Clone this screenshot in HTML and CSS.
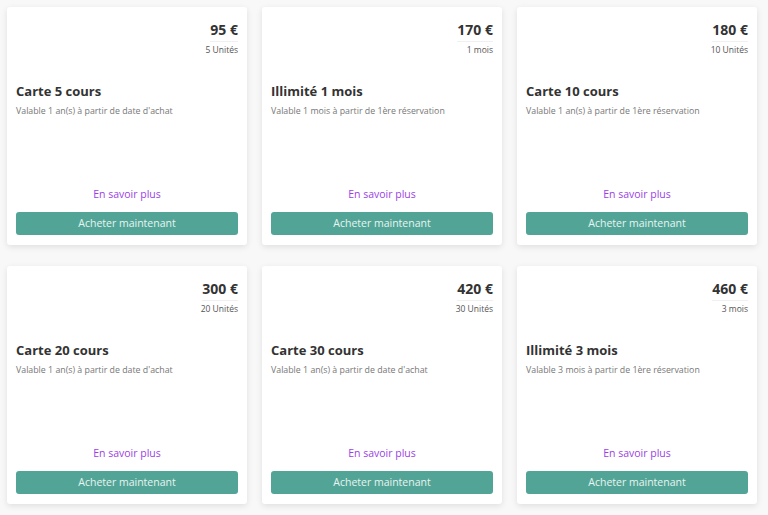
FILE: index.html
```html
<!DOCTYPE html>
<html lang="fr">
<head>
  <meta charset="UTF-8">
  <meta name="viewport" content="width=device-width, initial-scale=1.0">
  <title>Tarifs</title>
  <link rel="stylesheet" href="styles.css">
</head>
<body>
  <div class="offers">
    <div class="card">
      <div class="price-box">
        <div class="price">95 €</div>
        <div class="units">5 Unités</div>
      </div>
      <div class="title">Carte 5 cours</div>
      <div class="desc">Valable 1 an(s) à partir de date d'achat</div>
      <a class="more" href="#">En savoir plus</a>
      <div class="buy">Acheter maintenant</div>
    </div>

    <div class="card">
      <div class="price-box">
        <div class="price">170 €</div>
        <div class="units">1 mois</div>
      </div>
      <div class="title">Illimité 1 mois</div>
      <div class="desc">Valable 1 mois à partir de 1ère réservation</div>
      <a class="more" href="#">En savoir plus</a>
      <div class="buy">Acheter maintenant</div>
    </div>

    <div class="card">
      <div class="price-box">
        <div class="price">180 €</div>
        <div class="units">10 Unités</div>
      </div>
      <div class="title">Carte 10 cours</div>
      <div class="desc">Valable 1 an(s) à partir de 1ère réservation</div>
      <a class="more" href="#">En savoir plus</a>
      <div class="buy">Acheter maintenant</div>
    </div>

    <div class="card">
      <div class="price-box">
        <div class="price">300 €</div>
        <div class="units">20 Unités</div>
      </div>
      <div class="title">Carte 20 cours</div>
      <div class="desc">Valable 1 an(s) à partir de date d'achat</div>
      <a class="more" href="#">En savoir plus</a>
      <div class="buy">Acheter maintenant</div>
    </div>

    <div class="card">
      <div class="price-box">
        <div class="price">420 €</div>
        <div class="units">30 Unités</div>
      </div>
      <div class="title">Carte 30 cours</div>
      <div class="desc">Valable 1 an(s) à partir de date d'achat</div>
      <a class="more" href="#">En savoir plus</a>
      <div class="buy">Acheter maintenant</div>
    </div>

    <div class="card">
      <div class="price-box">
        <div class="price">460 €</div>
        <div class="units">3 mois</div>
      </div>
      <div class="title">Illimité 3 mois</div>
      <div class="desc">Valable 3 mois à partir de 1ère réservation</div>
      <a class="more" href="#">En savoir plus</a>
      <div class="buy">Acheter maintenant</div>
    </div>
  </div>
</body>
</html>
```
FILE: styles.css
```css
body {
  margin: 0;
  background-color: #f8f8f8;
  color: #333;
  font-family: "Open Sans", Arial, sans-serif;
}

.offers {
  display: grid;
  grid-template-columns: repeat(3, 240px);
  column-gap: 15px;
  row-gap: 21px;
  padding: 7px;
}

.card {
  display: flex;
  flex-direction: column;
  height: 238px;
  box-sizing: border-box;
  padding: 13px 9px 10px 9px;
  background-color: #fff;
  border-radius: 3px;
  box-shadow: 0 2px 6px rgba(0, 0, 0, 0.1);
}

.price-box {
  display: flex;
  flex-direction: column;
  align-items: flex-end;
}

.price {
  font-size: 14px;
  font-weight: 700;
  line-height: 20px;
  color: #333;
  border-bottom: 1px solid #f0f0f0;
  padding-bottom: 1px;
}

.units {
  font-size: 8.5px;
  line-height: 12px;
  margin-top: 2px;
  color: #555;
}

.title {
  margin-top: 26px;
  font-size: 13px;
  font-weight: 700;
  line-height: 18px;
  color: #333;
}

.desc {
  margin-top: 5px;
  font-size: 8.8px;
  line-height: 12px;
  color: #777;
}

.more {
  margin-top: auto;
  text-align: center;
  font-size: 10.5px;
  line-height: 14px;
  color: #9b3fe6;
  text-decoration: none;
}

.buy {
  margin-top: 11px;
  height: 23px;
  line-height: 23px;
  text-align: center;
  font-size: 10.5px;
  color: #e8f4f1;
  background-color: #52a596;
  border-radius: 3px;
}
```
